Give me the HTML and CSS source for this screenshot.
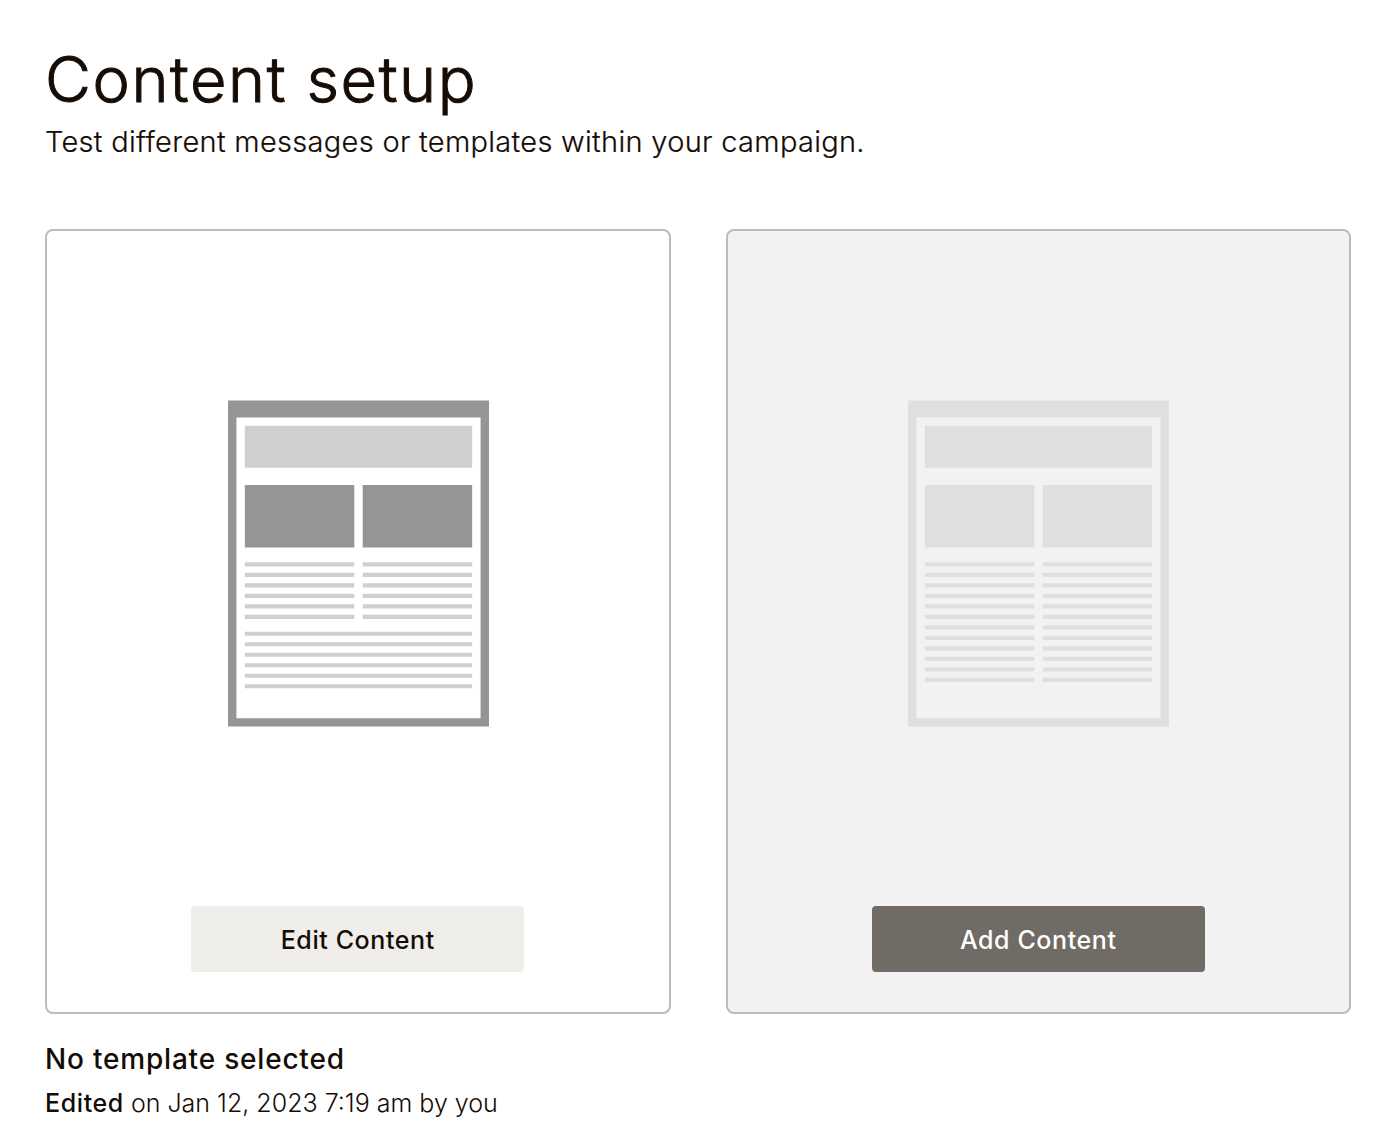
FILE: index.html
```html
<!DOCTYPE html>
<html lang="en">

<head>
    <meta charset="UTF-8">
    <meta name="viewport" content="width=device-width, initial-scale=1.0">
    <title>Content setup</title>
    <link rel="stylesheet" href="styles.css">
</head>

<body>
    <div class="page">
        <h1 class="title">Content setup</h1>
        <p class="subtitle">Test different messages or templates within your campaign.</p>
        <div class="cards">
            <div class="card">
                <div class="preview">
                    <svg class="template" width="261" height="326" viewBox="0 0.1 62 77.6" preserveAspectRatio="none">
                        <path class="frame" fill-rule="evenodd" d="M0 0h62v77.6H0z M2 4v71.6h58V4z" />
                        <path class="banner" d="M4 6h54v10H4z" />
                        <path class="image" d="M4 20.1h26V35H4z M32 20.1h26V35H32z" />
                        <path class="lines" d="M4 39h26 M4 41.5h26 M4 44h26 M4 46.5h26 M4 49h26 M4 51.5h26" />
                        <path class="lines" d="M32 39h26 M32 41.5h26 M32 44h26 M32 46.5h26 M32 49h26 M32 51.5h26" />
                        <path class="lines" d="M4 55.5h54 M4 58h54 M4 60.5h54 M4 63h54 M4 65.5h54 M4 68h54" />
                    </svg>
                </div>
                <button class="btn btn-edit">Edit Content</button>
            </div>
            <div class="card card-empty">
                <div class="preview">
                    <svg class="template" width="261" height="326" viewBox="0 0.1 62 77.6" preserveAspectRatio="none">
                        <path class="frame" fill-rule="evenodd" d="M0 0h62v77.6H0z M2 4v71.6h58V4z" />
                        <path class="banner" d="M4 6h54v10H4z" />
                        <path class="image" d="M4 20.1h26V35H4z M32 20.1h26V35H32z" />
                        <path class="lines" d="M4 39h26 M4 41.5h26 M4 44h26 M4 46.5h26 M4 49h26 M4 51.5h26 M4 54h26 M4 56.5h26 M4 59h26 M4 61.5h26 M4 64h26 M4 66.5h26" />
                        <path class="lines" d="M32 39h26 M32 41.5h26 M32 44h26 M32 46.5h26 M32 49h26 M32 51.5h26 M32 54h26 M32 56.5h26 M32 59h26 M32 61.5h26 M32 64h26 M32 66.5h26" />
                    </svg>
                </div>
                <button class="btn btn-add">Add Content</button>
            </div>
        </div>
        <h2 class="status">No template selected</h2>
        <p class="edited"><strong>Edited</strong> on Jan 12, 2023 7:19 am by you</p>
    </div>
</body>

</html>
```
FILE: styles.css
```css
* {
    margin: 0;
    padding: 0;
    box-sizing: border-box;
}
body {
    background-color: #fff;
    color: #150c06;
    font-family: Inter, "Liberation Sans", sans-serif;
}
.page {
    padding: 41px 49px 0 45px;
}
.title {
    font-size: 63px;
    font-weight: 300;
    line-height: 77px;
    letter-spacing: 1.6px;
    -webkit-text-stroke: 1px #150c06;
}
.subtitle {
    padding-top: 2px;
    font-size: 29px;
    font-weight: 300;
    line-height: 44px;
    letter-spacing: 0.3px;
    white-space: nowrap;
    -webkit-text-stroke: 0.2px #150c06;
}
.cards {
    display: grid;
    grid-template-columns: 1fr 1fr;
    gap: 55px;
    margin-top: 65px;
}
.card {
    display: flex;
    flex-direction: column;
    align-items: center;
    height: 785px;
    padding-bottom: 40px;
    border: 2px solid #bdbcba;
    border-radius: 8px;
}
.card-empty {
    background-color: #f2f2f2;
}
.preview {
    flex: 1;
    padding: 170px 0 0 1px;
}
.template {
    display: block;
    overflow: visible;
}
.frame,
.image {
    fill: #959595;
}
.banner {
    fill: #cfcfcf;
}
.lines {
    fill: none;
    stroke: #cfcfcf;
    stroke-width: 1;
}
.card-empty .frame,
.card-empty .image,
.card-empty .banner {
    fill: #dfdfdf;
}
.card-empty .lines {
    stroke: #dfdfdf;
}
.btn {
    width: 333px;
    height: 66px;
    padding-top: 2px;
    border: none;
    border-radius: 4px;
    font-family: inherit;
    font-size: 25px;
    font-weight: 500;
    letter-spacing: 0.6px;
    cursor: pointer;
}
.btn-edit {
    background-color: #efeeea;
    color: #150c06;
}
.btn-add {
    background-color: #706b65;
    color: #fff;
}
.status {
    margin-top: 27px;
    font-size: 28px;
    font-weight: 500;
    line-height: 36px;
    letter-spacing: 0.8px;
}
.edited {
    margin-top: 9px;
    font-size: 25px;
    font-weight: 300;
    line-height: 34px;
}
.edited strong {
    font-weight: 500;
    letter-spacing: 0.6px;
}
```
